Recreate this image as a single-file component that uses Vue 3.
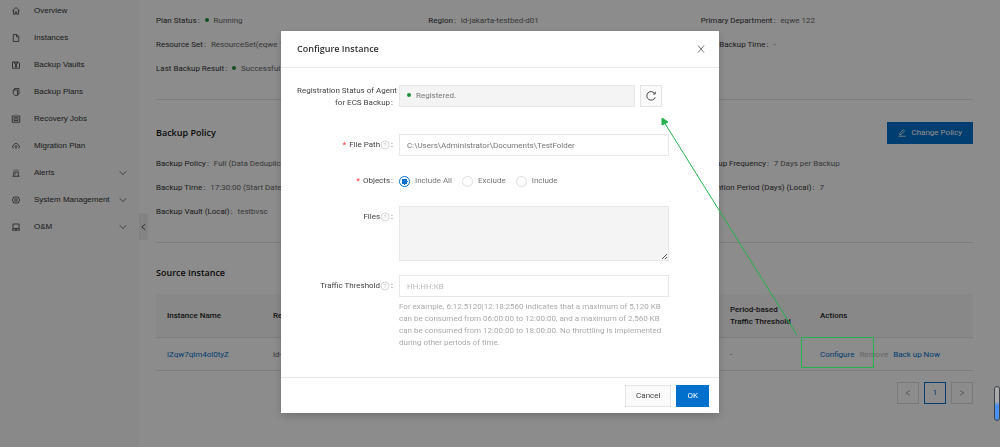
<script setup>
import { ref } from 'vue'

const menu = [
  { label: 'Overview', icon: 'home' },
  { label: 'Instances', icon: 'file' },
  { label: 'Backup Vaults', icon: 'vault' },
  { label: 'Backup Plans', icon: 'plans' },
  { label: 'Recovery Jobs', icon: 'jobs' },
  { label: 'Migration Plan', icon: 'cloud' },
  { label: 'Alerts', icon: 'alert', sub: true },
  { label: 'System Management', icon: 'gear', sub: true },
  { label: 'O&M', icon: 'laptop', sub: true },
]

const icons = {
  home: 'M.5 8 8 1 15.5 8M3 6.5V14.500h3.500V9.500h3v5H13V6.500',
  file: 'M2.500 1h7l4 4v10h-11zM9 1v4.500h4.500',
  vault: 'M1 2h11l3 2v10.500H1zM4.500 2v2.500h6.500V2M6 7.500h4M6 11.500h4M6.500 7.500l3 4M9.500 7.500l-3 4',
  plans: 'M5 4V1h9v11l-2 1M2.500 4H11v11H6l-3.500-3.500z',
  jobs: 'M.5 2h15v12.500H.5zM4 5.500h8v5.500H4zM6.500 8.200h3',
  cloud: 'M4 12C0 12 0 7.500 3 7 4 1.500 12 1.500 13 7c3 .5 3 5-1 5M8 14V7.500M5.700 9.500 8 7.200l2.300 2.300',
  alert: 'M1 14.500h14M3.500 14.500V6h9v8.500M8 .5v2.500M2.500 1.500l1.500 2M13.500 1.500 12 3.500M6.500 8.500v2.500',
  gear: 'M8 .8l2 1.900 3-.5.700 2.900L15.500 8l-1.800 2.900-.7 2.900-3-.5L8 15.200l-2-1.900-3 .5-.7-2.900L.5 8l1.800-2.900L3 2.200l3 .5zM8 5.300a2.700 2.700 0 1 0 0 5.400 2.700 2.700 0 0 0 0-5.400',
  laptop: 'M2 2h12v9H2zM1 11v3.500h14V11M6 12.700h4',
}

const planInfo = [
  { label: '', value: '' },
  { label: 'Description', value: '' },
  { label: 'Backup Type', value: '' },
  { label: 'Plan Status', value: 'Running', dot: true },
  { label: 'Region', value: 'id-jakarta-testbed-d01' },
  { label: 'Primary Department', value: 'eqwe 122' },
  { label: 'Resource Set', value: 'ResourceSet(eqwe 122)' },
  { label: '', value: '' },
  { label: 'Next Backup Time', value: '-' },
  { label: 'Last Backup Result', value: 'Successful', dot: true },
]

const policyInfo = [
  { label: 'Backup Policy', value: 'Full (Data Deduplication)' },
  { label: '', value: '' },
  { label: 'Backup Frequency', value: '7 Days per Backup' },
  { label: 'Backup Time', value: '17:30:00 (Start Date: -)' },
  { label: '', value: '' },
  { label: 'Retention Period (Days) (Local)', value: '7' },
  { label: 'Backup Vault (Local)', value: 'testbvsc' },
]

const filePath = ref('C:\\Users\\Administrator\\Documents\\TestFolder')
const mode = ref('Include All')
const files = ref('')
const threshold = ref('')
</script>

<template>
  <div class="shell">
    <nav class="sidebar">
      <a v-for="m in menu" :key="m.label" href="#" class="item">
        <svg class="item-icon" viewBox="0 0 16 16"><path :d="icons[m.icon]" /></svg>
        <span>{{ m.label }}</span>
        <svg v-if="m.sub" class="chev" viewBox="0 0 8 8"><path d="M.7 2.200 4 5.700 7.300 2.200" /></svg>
      </a>
      <button class="collapse" type="button" aria-label="Collapse menu">
        <svg viewBox="0 0 8 8"><path d="M6 .8 2 4l4 3.200" /></svg>
      </button>
    </nav>

    <main class="main">
      <section class="section">
        <dl class="info">
          <div v-for="(r, i) in planInfo" :key="i" class="pair">
            <template v-if="r.label">
              <dt>{{ r.label }}<span class="colon">:</span></dt>
              <dd><i v-if="r.dot" class="dot"></i>{{ r.value }}</dd>
            </template>
          </div>
        </dl>
      </section>

      <section class="section spaced">
        <div class="head">
          <h2>Backup Policy</h2>
          <button class="change" type="button">
            <svg viewBox="0 0 16 16"><path d="M1 14.500h14M3 11.500l.7-3L10.500 1.500l2.800 2.600-7 6.800z" /></svg>
            Change Policy
          </button>
        </div>
        <dl class="info">
          <div v-for="(r, i) in policyInfo" :key="i" class="pair">
            <template v-if="r.label">
              <dt>{{ r.label }}<span class="colon">:</span></dt>
              <dd>{{ r.value }}</dd>
            </template>
          </div>
        </dl>
      </section>

      <section class="source">
        <h2>Source Instance</h2>
        <table>
          <colgroup>
            <col class="c-name" /><col /><col class="c-period" /><col class="c-actions" />
          </colgroup>
          <thead>
            <tr>
              <th>Instance Name</th>
              <th>Region</th>
              <th>Period-based<br />Traffic Threshold</th>
              <th>Actions</th>
            </tr>
          </thead>
          <tbody>
            <tr>
              <td><a href="#">iZqw7qlm4ol0tyZ</a></td>
              <td>id-jakarta</td>
              <td>-</td>
              <td>
                <div class="actions">
                  <a href="#">Configure</a><span class="off">Remove</span><a href="#">Back up Now</a>
                </div>
              </td>
            </tr>
          </tbody>
        </table>
        <div class="pager">
          <button type="button" aria-label="Previous page"><svg viewBox="0 0 8 8"><path d="M6.500 1 1.500 4l5 3" /></svg></button>
          <button type="button" class="current">1</button>
          <button type="button" aria-label="Next page"><svg viewBox="0 0 8 8"><path d="m1.500 1 5 3-5 3" /></svg></button>
        </div>
      </section>
    </main>
  </div>

  <div class="mask">
    <form class="modal" role="dialog" aria-labelledby="dlg-title" @submit.prevent>
      <header>
        <h1 id="dlg-title">Configure Instance</h1>
        <button class="close" type="button" aria-label="Close">
          <svg viewBox="0 0 8 8"><path d="M1 .5 7 7.500M7 .5 1 7.500" /></svg>
        </button>
      </header>

      <div class="body">
        <div class="row status-row">
          <label class="double" for="status">Registration Status of Agent<br />for ECS Backup<span class="colon">:</span></label>
          <div class="status-line">
            <output id="status" class="status"><i class="dot"></i>Registered.</output>
            <button class="refresh" type="button" aria-label="Refresh">
              <svg viewBox="0 0 12 12"><path d="M9.800 3.600A4.300 4.300 0 1 0 10.200 7.300M10.200 1.800V4H8" /></svg>
            </button>
          </div>
        </div>

        <div class="row">
          <label for="path"><b>*</b>File Path
            <svg class="help" viewBox="0 0 16 16"><circle cx="8" cy="8" r="8" /><path d="M5.800 6.200C6 3.700 10.200 3.900 10.200 6.300 10.200 7.800 8 7.800 8 9.600M8 11v1.300" /></svg><span class="colon">:</span></label>
          <input id="path" v-model="filePath" class="field" type="text" />
        </div>

        <div class="row" role="radiogroup" aria-labelledby="objects">
          <span id="objects" class="label"><b>*</b>Objects<span class="colon">:</span></span>
          <div class="radios">
            <label v-for="o in ['Include All', 'Exclude', 'Include']" :key="o">
              <input v-model="mode" type="radio" name="objects" :value="o" />{{ o }}
            </label>
          </div>
        </div>

        <div class="row">
          <label for="files">Files
            <svg class="help" viewBox="0 0 16 16"><circle cx="8" cy="8" r="8" /><path d="M5.800 6.200C6 3.700 10.200 3.900 10.200 6.300 10.200 7.800 8 7.800 8 9.600M8 11v1.300" /></svg><span class="colon">:</span></label>
          <div class="area">
            <textarea id="files" v-model="files" disabled></textarea>
            <svg class="grip" viewBox="0 0 7 7"><path d="M1 6 6 1M4 6l2-2" /></svg>
          </div>
        </div>

        <div class="row">
          <label for="limit">Traffic Threshold
            <svg class="help" viewBox="0 0 16 16"><circle cx="8" cy="8" r="8" /><path d="M5.800 6.200C6 3.700 10.200 3.900 10.200 6.300 10.200 7.800 8 7.800 8 9.600M8 11v1.300" /></svg><span class="colon">:</span></label>
          <div>
            <input id="limit" v-model="threshold" class="field" type="text" placeholder="HH:HH:KB" />
            <p class="hint">
              For example, 6:12:5120|12:18:2560 indicates that a maximum of 5,120 KB<br />
              can be consumed from 06:00:00 to 12:00:00, and a maximum of 2,560 KB<br />
              can be consumed from 12:00:00 to 18:00:00. No throttling is implemented<br />
              during other periods of time.
            </p>
          </div>
        </div>
      </div>

      <footer>
        <button class="btn" type="button">Cancel</button>
        <button class="btn primary" type="submit">OK</button>
      </footer>
    </form>
  </div>

  <svg class="callout" width="1000" height="447" viewBox="0 0 1000 447">
    <rect x="801.500" y="337.500" width="72" height="30" />
    <path d="M797 335 664 122" />
    <polygon points="662,118 668,122 662,125" />
  </svg>
  <div class="scroll-thumb"></div>
</template>

<style>
body {
  margin: 0;
  background: #fff;
}
</style>

<style scoped>
* {
  box-sizing: border-box;
}
.shell,
.mask {
  font-family: Roboto, "Open Sans", sans-serif;
  font-size: 8px;
  line-height: 12px;
  color: #444;
}
button,
input,
textarea {
  font: inherit;
  color: inherit;
}
button {
  display: flex;
  align-items: center;
  justify-content: center;
  padding: 0;
  cursor: pointer;
}
svg {
  fill: none;
  stroke: currentColor;
}
h1,
h2,
p,
dl,
dd {
  margin: 0;
}
a {
  color: #0070cc;
  text-decoration: none;
}
.shell {
  display: flex;
  height: 100vh;
  overflow: hidden;
}
.sidebar {
  position: relative;
  flex: 0 0 139px;
  margin-top: -3px;
  background: #f9f9f9;
}
.item {
  display: flex;
  align-items: center;
  height: 27px;
  padding: 0 12px;
  font-family: "Liberation Sans", Arial, sans-serif;
  white-space: nowrap;
  color: #333;
}
.item-icon {
  width: 8px;
  height: 8px;
  margin-right: 14px;
  stroke-width: 1.500;
  overflow: visible;
}
.chev {
  width: 8px;
  height: 8px;
  margin-left: auto;
  color: #777;
}
.collapse {
  position: absolute;
  top: 216px;
  left: 100%;
  width: 9px;
  height: 27px;
  border: 0;
  border-radius: 0 2px 2px 0;
  background: #eee;
}
.collapse svg {
  width: 7px;
  height: 8px;
}
.main {
  flex: 1;
  min-width: 0;
  margin-top: -9px;
  padding: 0 27px 0 17px;
}
.section {
  padding-bottom: 24px;
  border-bottom: 1px solid #e3e3e3;
}
.spaced {
  padding-top: 22px;
}
.info {
  display: grid;
  grid-template-columns: repeat(3, 1fr);
  gap: 12px 0;
}
.pair {
  display: flex;
  height: 12px;
  white-space: nowrap;
}
.pair dt {
  color: #333;
}
.pair dd {
  color: #666;
}
.pair .colon {
  margin: 0 5px 0 1px;
}
.dot {
  display: inline-block;
  width: 4px;
  height: 4px;
  margin-right: 5px;
  border-radius: 50%;
  background: #1e8e3e;
  vertical-align: 1px;
}
h1,
h2 {
  font-family: "Open Sans", "Noto Sans", sans-serif;
  font-size: 9px;
  line-height: 14px;
}
h2 {
  font-weight: 600;
  color: #111;
}
.head {
  display: flex;
  align-items: center;
  justify-content: space-between;
  margin-bottom: 14px;
}
.change {
  gap: 5px;
  height: 22px;
  padding: 0 11px;
  border: 0;
  background: #0070cc;
  color: #fff;
}
.change svg {
  width: 8px;
  height: 8px;
  stroke-width: 1.500;
}
.source {
  padding-top: 23px;
}
table {
  width: 100%;
  margin-top: 14px;
  border-collapse: separate;
  border-spacing: 0;
  table-layout: fixed;
}
.c-name {
  width: 106px;
}
.c-period {
  width: 90px;
}
.c-actions {
  width: 164px;
}
th,
td {
  padding: 1px 11px 0;
  border-bottom: 1px solid #e3e3e3;
  text-align: left;
  white-space: nowrap;
}
th {
  height: 44px;
  background: #f7f7f7;
  font-weight: 500;
  color: #222;
}
td {
  height: 33px;
  color: #666;
}
.actions {
  display: flex;
  gap: 5px;
}
.off {
  color: #bbb;
}
.pager {
  display: flex;
  justify-content: flex-end;
  gap: 5px;
  margin-top: 11px;
}
.pager button {
  width: 22px;
  height: 22px;
  border: 1px solid #ddd;
  background: none;
  color: #888;
}
.pager svg {
  width: 6px;
  height: 8px;
}
.pager .current {
  border-color: #0070cc;
  color: #0070cc;
}

.mask {
  position: fixed;
  inset: 0;
  display: flex;
  justify-content: center;
  align-items: flex-start;
  padding-top: 31px;
  background: rgba(0, 0, 0, 0.45);
}
.modal {
  width: 438px;
  max-width: 100%;
  background: #fff;
  box-shadow: 0 3px 8px rgba(0, 0, 0, 0.2);
}
header {
  display: flex;
  align-items: center;
  justify-content: space-between;
  height: 37px;
  padding: 0 14px 0 16px;
  border-bottom: 1px solid #e8e8e8;
}
h1 {
  font-weight: 600;
  color: #333;
}
.close {
  width: 9px;
  height: 9px;
  border: 0;
  background: none;
  color: #777;
}
.close svg {
  width: 8px;
  height: 8px;
}
.body {
  display: flex;
  flex-direction: column;
  gap: 14px;
  padding: 17px 50px 28px 16px;
}
.row {
  display: grid;
  grid-template-columns: 99px minmax(0, 1fr);
  column-gap: 3px;
}
.status-row {
  margin-bottom: 11px;
}
.row > label,
.label {
  display: flex;
  align-items: center;
  justify-content: flex-end;
  height: 22px;
  white-space: nowrap;
}
.row > .double {
  display: block;
  height: 24px;
  text-align: right;
}
.row .colon {
  margin: 0 3px 0 1px;
}
.row b {
  margin-right: 3px;
  color: #ff4d4f;
}
.help {
  width: 8px;
  height: 8px;
  margin: 0 1px;
  color: #aaa;
  overflow: visible;
}
.status-line {
  display: flex;
  gap: 5px;
  padding-right: 7px;
}
.status {
  flex: 1;
  height: 22px;
  padding: 0 7px;
  border: 1px solid #e8e8e8;
  background: #f4f4f4;
  line-height: 20px;
  color: #777;
}
.refresh {
  width: 22px;
  height: 22px;
  border: 1px solid #e3e3e3;
  background: #fafafa;
}
.refresh svg {
  width: 12px;
  height: 12px;
}
.field {
  display: block;
  width: 100%;
  height: 22px;
  padding: 0 7px;
  border: 1px solid #e8e8e8;
  background: #fff;
  color: #777;
  outline: 0;
}
.field::placeholder {
  color: #bbb;
}
.radios {
  display: flex;
  align-items: center;
  gap: 10px;
  color: #777;
}
.radios label {
  display: flex;
  align-items: center;
  gap: 5px;
}
.radios input {
  appearance: none;
  width: 11px;
  height: 11px;
  margin: 0;
  border: 1px solid #ddd;
  border-radius: 50%;
}
.radios input:checked {
  border-color: #0070cc;
  background: radial-gradient(circle, #0070cc 3px, #fff 3px);
}
.area {
  position: relative;
}
textarea {
  display: block;
  width: 100%;
  height: 55px;
  padding: 4px 7px;
  border: 1px solid #e8e8e8;
  background: #f4f4f4;
  resize: none;
}
.grip {
  position: absolute;
  right: 1px;
  bottom: 1px;
  width: 7px;
  height: 7px;
  color: #555;
}
.hint {
  margin-top: 4px;
  color: #aaa;
  white-space: nowrap;
}
footer {
  display: flex;
  justify-content: flex-end;
  gap: 5px;
  padding: 7px 10px 6px;
  border-top: 1px solid #e8e8e8;
}
.btn {
  height: 22px;
  padding: 0 10px;
  border: 1px solid #e3e3e3;
  background: #fafafa;
}
.primary {
  border-color: #0070cc;
  background: #0070cc;
  color: #fff;
}
.callout {
  position: absolute;
  top: 0;
  left: 0;
  color: #22b14c;
  pointer-events: none;
}
.callout polygon {
  fill: currentColor;
}
.scroll-thumb {
  position: fixed;
  right: 0;
  top: 386px;
  width: 6px;
  height: 35px;
  border: 1px solid #3c414a;
  border-radius: 3px;
  background: linear-gradient(#aaa 45%, #4a90f0 55%);
}
</style>
